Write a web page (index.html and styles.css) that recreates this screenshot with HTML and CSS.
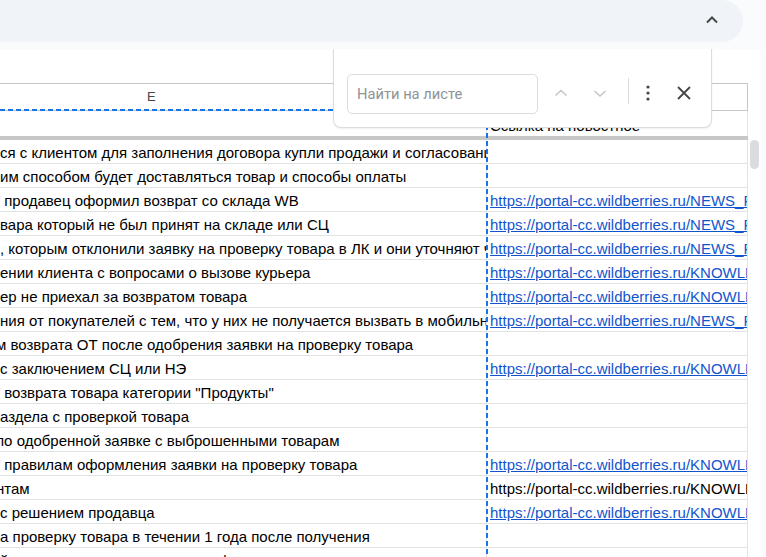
FILE: index.html
```html
<!DOCTYPE html>
<html>
<head>
    <title>Таблица - поиск на листе</title>
    <link rel="stylesheet" href="styles.css">
</head>
<body>
    <div class="topbar">
        <div class="pill">
            <svg class="pill-chevron" width="14" height="10" viewBox="0 0 14 10"><polyline points="2,7.5 7,2.5 12,7.5" fill="none" stroke="#444746" stroke-width="2"/></svg>
        </div>
    </div>

    <div class="sheet">
        <div class="toolbar-gap"></div>
        <div class="grid">
            <div class="cols">
                <div class="hdr">
                    <div class="hcell col-e">E</div>
                    <div class="hcell col-f">F</div>
                </div>
                <div class="row frozen">
                    <div class="cell col-e"></div>
                    <div class="cell col-f">Ссылка на новостное</div>
                </div>

                <div class="row"><div class="cell col-e">ся с клиентом для заполнения договора купли продажи и согласования</div><div class="cell col-f"></div></div>
                <div class="row"><div class="cell col-e">им способом будет доставляться товар и способы оплаты</div><div class="cell col-f"></div></div>
                <div class="row"><div class="cell col-e">&nbsp;продавец оформил возврат со склада WB</div><div class="cell col-f"><a href="#">https://portal-cc.wildberries.ru/NEWS_R</a></div></div>
                <div class="row"><div class="cell col-e">вара который не был принят на складе или СЦ</div><div class="cell col-f"><a href="#">https://portal-cc.wildberries.ru/NEWS_R</a></div></div>
                <div class="row"><div class="cell col-e">, которым отклонили заявку на проверку товара в ЛК и они уточняют что</div><div class="cell col-f"><a href="#">https://portal-cc.wildberries.ru/NEWS_R</a></div></div>
                <div class="row"><div class="cell col-e">ении клиента с вопросами о вызове курьера</div><div class="cell col-f"><a href="#">https://portal-cc.wildberries.ru/KNOWLE</a></div></div>
                <div class="row"><div class="cell col-e">ер не приехал за возвратом товара</div><div class="cell col-f"><a href="#">https://portal-cc.wildberries.ru/KNOWLE</a></div></div>
                <div class="row"><div class="cell col-e">ния от покупателей с тем, что у них не получается вызвать в мобильном</div><div class="cell col-f"><a href="#">https://portal-cc.wildberries.ru/NEWS_R</a></div></div>
                <div class="row"><div class="cell col-e cut">м возврата ОТ после одобрения заявки на проверку товара</div><div class="cell col-f"></div></div>
                <div class="row"><div class="cell col-e">с заключением СЦ или НЭ</div><div class="cell col-f"><a href="#">https://portal-cc.wildberries.ru/KNOWLE</a></div></div>
                <div class="row"><div class="cell col-e">&nbsp;возврата товара категории "Продукты"</div><div class="cell col-f"></div></div>
                <div class="row"><div class="cell col-e">аздела с проверкой товара</div><div class="cell col-f"></div></div>
                <div class="row"><div class="cell col-e cut">по одобренной заявке с выброшенными товарам</div><div class="cell col-f"></div></div>
                <div class="row"><div class="cell col-e">&nbsp;правилам оформления заявки на проверку товара</div><div class="cell col-f"><a href="#">https://portal-cc.wildberries.ru/KNOWLE</a></div></div>
                <div class="row"><div class="cell col-e cut">нтам</div><div class="cell col-f">https://portal-cc.wildberries.ru/KNOWLE</div></div>
                <div class="row"><div class="cell col-e">с решением продавца</div><div class="cell col-f"><a href="#">https://portal-cc.wildberries.ru/KNOWLE</a></div></div>
                <div class="row"><div class="cell col-e">а проверку товара в течении 1 года после получения</div><div class="cell col-f"></div></div>
                <div class="row"><div class="cell col-e">й с покупателем при выдаче информации</div><div class="cell col-f"></div></div>

                <!-- copy marquee around column E -->
                <div class="marquee-h"></div>
                <div class="marquee-v"></div>
            </div>
            <div class="vscroll">
                <div class="thumb"></div>
            </div>
        </div>
    </div>

    <div class="find-panel">
        <div class="find-input">Найти на листе</div>
        <button class="icon-btn btn-up" title="Назад">
            <svg width="20" height="20" viewBox="0 0 20 20"><polyline points="4.5,12.5 10,7.5 15.5,12.5" fill="none" stroke="#c4c7c5" stroke-width="1.6"/></svg>
        </button>
        <button class="icon-btn btn-down" title="Далее">
            <svg width="20" height="20" viewBox="0 0 20 20"><polyline points="4.5,8 10,13 15.5,8" fill="none" stroke="#c4c7c5" stroke-width="1.6"/></svg>
        </button>
        <div class="divider"></div>
        <button class="icon-btn btn-more" title="Ещё">
            <svg width="20" height="20" viewBox="0 0 20 20"><circle cx="10" cy="4" r="1.6" fill="#444746"/><circle cx="10" cy="10" r="1.6" fill="#444746"/><circle cx="10" cy="16" r="1.6" fill="#444746"/></svg>
        </button>
        <button class="icon-btn btn-close" title="Закрыть">
            <svg width="20" height="20" viewBox="0 0 20 20"><path d="M4 4 L16 16 M16 4 L4 16" fill="none" stroke="#444746" stroke-width="1.8"/></svg>
        </button>
    </div>
</body>
</html>
```

FILE: styles.css
```css
body {
    margin: 0;
    width: 766px;
    height: 557px;
    overflow: hidden;
    position: relative;
    background: #f9fbfd;
    font-family: "Liberation Sans", Arial, sans-serif;
}

/* top bar */
.topbar {
    height: 42px;
    display: flex;
}

.pill {
    width: 743px;
    height: 42px;
    background: #f0f4f9;
    border-radius: 0 21px 21px 0;
    display: flex;
    align-items: center;
    justify-content: flex-end;
    padding-right: 24px;
    box-sizing: border-box;
}

.pill-chevron {
    margin-top: -2px;
}

/* sheet */
.sheet {
    margin-top: 8px;
    width: 761px;
    background: #fff;
}

.toolbar-gap {
    height: 33px;
}

.grid {
    display: flex;
}

.cols {
    width: 748px;
    position: relative;
}

.hdr {
    display: flex;
    height: 28px;
    border-top: 1px solid #c4c7c5;
    border-bottom: 1px solid #c4c7c5;
    box-sizing: border-box;
}

.hcell {
    font-size: 13px;
    color: #444746;
    line-height: 26px;
    box-sizing: border-box;
    border-right: 1px solid #c4c7c5;
}

.hcell.col-e {
    padding-left: 147px;
}

.hcell.col-f {
    text-align: center;
}

.col-e {
    width: 487px;
    flex: none;
}

.col-f {
    width: 261px;
    flex: none;
}

.row {
    display: flex;
    height: 24px;
    border-bottom: 1px solid #e2e3e3;
    box-sizing: border-box;
}

.row.frozen {
    height: 29px;
    border-bottom: 4px solid #c7c7c7;
}

.cell {
    box-sizing: border-box;
    border-right: 1px solid #e2e3e3;
    font-size: 15px;
    line-height: 17px;
    color: #000;
    white-space: nowrap;
    overflow: hidden;
    display: flex;
    align-items: flex-end;
    padding-bottom: 2px;
}

.cell.col-f {
    padding-left: 3px;
}

.cell.cut {
    text-indent: -4px;
}

.cell a {
    color: #1155cc;
    text-decoration: underline;
}

.marquee-h {
    position: absolute;
    left: 0;
    top: 26px;
    width: 488px;
    height: 2px;
    background: repeating-linear-gradient(90deg, #1a73e8 0 5px, transparent 5px 8px);
}

.marquee-v {
    position: absolute;
    left: 486px;
    top: 26px;
    width: 2px;
    bottom: 0;
    background: repeating-linear-gradient(180deg, #1a73e8 0 5px, transparent 5px 8px);
}

.vscroll {
    width: 13px;
    padding: 57px 2px 0 2px;
    box-sizing: border-box;
}

.thumb {
    width: 9px;
    height: 29px;
    border-radius: 5px;
    background: #dadce0;
}

/* find panel */
.find-panel {
    position: absolute;
    left: 333px;
    top: 49px;
    width: 379px;
    height: 79px;
    box-sizing: border-box;
    background: #fff;
    border: 1px solid #dadce0;
    border-top: none;
    border-radius: 0 0 8px 8px;
    box-shadow: 0 1px 2px rgba(60, 64, 67, 0.08);
    display: flex;
    align-items: flex-start;
    padding: 25px 0 0 13px;
    font-family: Roboto, "Noto Sans", sans-serif;
}

.find-input {
    width: 191px;
    height: 40px;
    box-sizing: border-box;
    border: 1px solid #dadce0;
    border-radius: 5px;
    padding-left: 9px;
    font-size: 14.7px;
    line-height: 38px;
    color: #8f9296;
}

.icon-btn {
    width: 32px;
    height: 32px;
    margin-top: 3px;
    border: none;
    background: none;
    padding: 0;
    display: flex;
    align-items: center;
    justify-content: center;
}

.btn-up {
    margin-left: 7px;
}

.btn-down {
    margin-left: 7px;
}

.divider {
    width: 1px;
    height: 26px;
    margin-top: 4px;
    background: #dadce0;
    margin-left: 12px;
}

.btn-more {
    margin-left: 3px;
}

.btn-close {
    margin-left: 4px;
}
```
